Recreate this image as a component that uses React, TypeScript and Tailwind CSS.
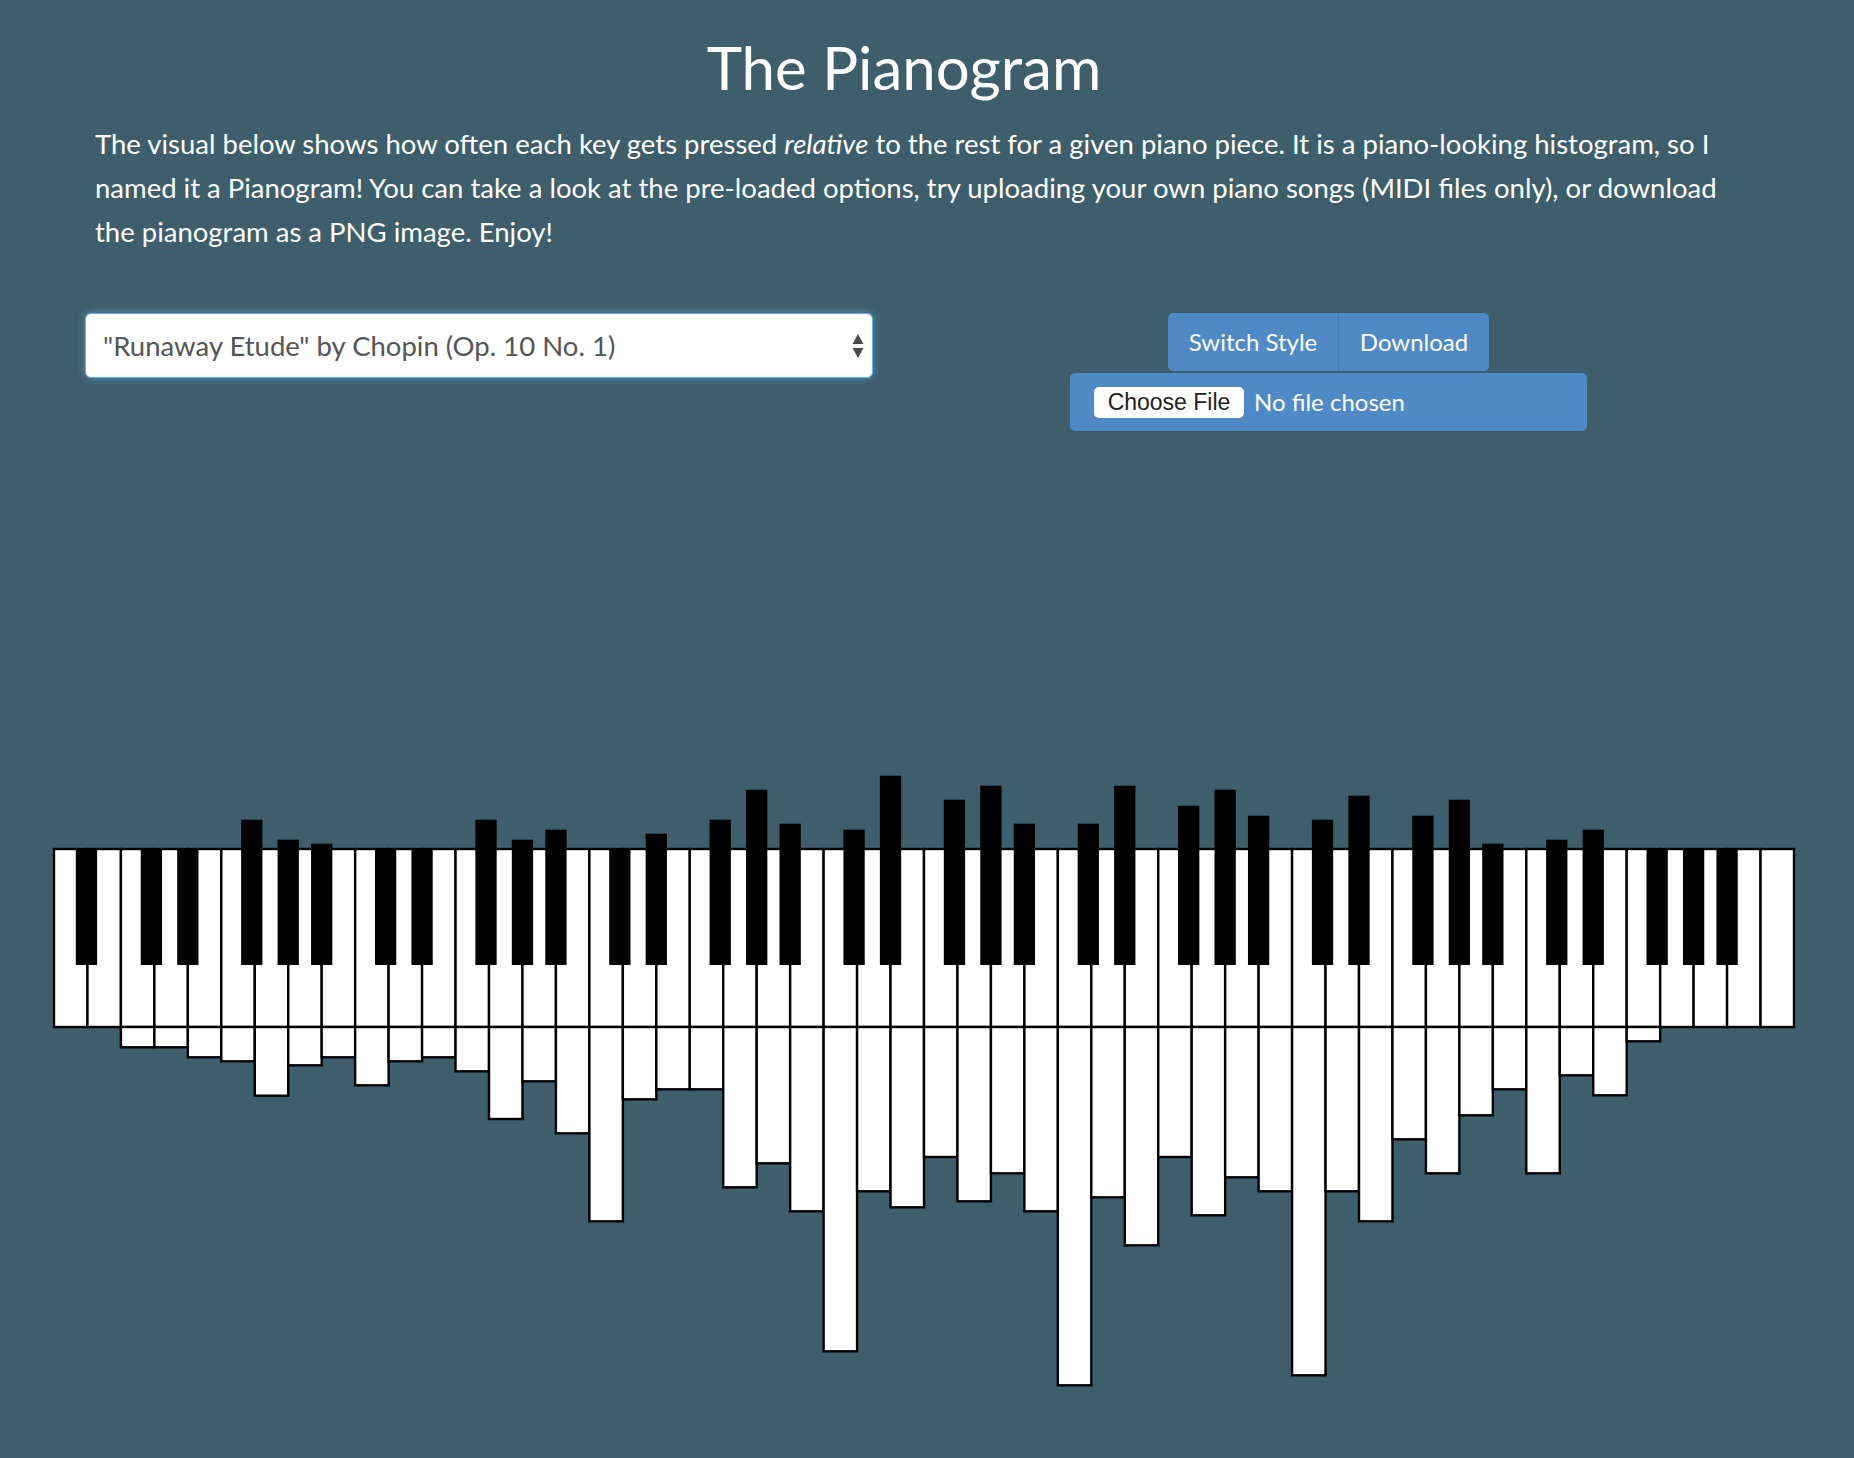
import React from 'react';

// how far each white key's bar drops below the keyboard (A0 .. C8)
const WHITE_EXT = [
  0, 0, 20.3, 20.3, 30.3, 34.3, 68.7, 38.3, 30.3, 58.3, 34.3, 30.3, 44.3, 92, 54.3, 106.3,
  194.3, 72.3, 62.3, 62.3, 160.3, 136.3, 184.3, 324.3, 164.3, 180.3, 130, 174.3, 146.3, 184.3,
  358.3, 170.3, 218.3, 130, 188.3, 150.3, 164.3, 348.3, 164.3, 194.3, 112.3, 146.3, 88.3, 62.3,
  146.3, 48.3, 68.3, 14.3, 0, 0, 0, 0,
];

// how far each black key's bar rises above the keyboard (A#0 .. A#7)
const BLACK_EXT = [
  0, 0, 0, 29.3, 9.3, 5.3, 0, 0, 29.3, 9.3, 19.3, 0, 15.3, 29.3, 59.3, 25.3, 19.3, 73.3,
  49.3, 63.3, 25.3, 25.3, 63.3, 43.3, 59.3, 33.3, 29.3, 53.3, 33.3, 49.3, 5.3, 9.3, 19.3, 0, 0, 0,
];

const KEY_LEFT = 54;
const KEY_RIGHT = 1794;
const WW = (KEY_RIGHT - KEY_LEFT) / 52;
const TOP = 849;
const BOTTOM = 1027;
const BLACK_BOTTOM = 965;
const BW = 21.3;
const STROKE = 2.4;

const blackKeys: { j: number; off: number }[] = [{ j: 0, off: -1 }];
for (let k = 0; k < 7; k++) {
  const c = 2 + 7 * k;
  blackKeys.push(
    { j: c, off: -3 },
    { j: c + 1, off: 0 },
    { j: c + 3, off: -3 },
    { j: c + 4, off: 0 },
    { j: c + 5, off: 0 },
  );
}

function Pianogram() {
  return (
    <svg className="mt-[309px] block" width={1854} height={718} viewBox="0 740 1854 718">
      {WHITE_EXT.map((_, i) => (
        <rect
          key={`w${i}`}
          x={KEY_LEFT + i * WW}
          y={TOP}
          width={WW}
          height={BOTTOM - TOP}
          fill="#fff"
          stroke="#000"
          strokeWidth={STROKE}
        />
      ))}
      {WHITE_EXT.map((ext, i) =>
        ext > 0 ? (
          <rect
            key={`we${i}`}
            x={KEY_LEFT + i * WW}
            y={BOTTOM}
            width={WW}
            height={ext}
            fill="#fff"
            stroke="#000"
            strokeWidth={STROKE}
          />
        ) : null,
      )}
      {blackKeys.map((b, n) => {
        const cx = KEY_LEFT + (b.j + 1) * WW + b.off;
        const h = BLACK_EXT[n];
        return (
          <rect
            key={`b${n}`}
            x={cx - BW / 2}
            y={TOP - h}
            width={BW}
            height={BLACK_BOTTOM - TOP + h}
            fill="#000"
          />
        );
      })}
    </svg>
  );
}

export default function App() {
  return (
    <div className="min-h-[1458px] w-full overflow-hidden bg-[#3e5e6b] font-['Lato',sans-serif] text-white">
      <h1 className="pt-[31px] pr-[46px] text-center text-[60px] leading-[72px] font-normal">The Pianogram</h1>
      <p className="mx-[95px] mt-[19px] w-[1640px] text-[27.5px] leading-[44px]">
        The visual below shows how often each key gets pressed <em>relative</em> to the rest for a given
        piano piece. It is a piano-looking histogram, so I named it a Pianogram! You can take a look at
        the pre-loaded options, try uploading your own piano songs (MIDI files only), or download the
        pianogram as a PNG image. Enjoy!
      </p>

      <div className="mt-[59px] flex">
        <div className="ml-[85px] w-[788px]">
          <div className="flex h-[65px] items-center justify-between rounded-[6px] border border-[#66afe9] bg-white pl-[17px] pr-[8px] text-[27.5px] text-[#555] shadow-[0_0_8px_rgba(102,175,233,0.6)]">
            <span>"Runaway Etude" by Chopin (Op. 10 No. 1)</span>
            <svg width="12" height="26" viewBox="0 0 12 26">
              <path d="M6 1 L11.5 11 L0.5 11 Z" fill="#4a4a4a" />
              <path d="M0.5 15 L11.5 15 L6 25 Z" fill="#4a4a4a" />
            </svg>
          </div>
        </div>

        <div className="flex w-[911px] flex-col items-center">
          <div className="flex h-[58px] overflow-hidden rounded-[5px] bg-[#4f8ac6] text-[24px] text-white">
            <button className="w-[171px] border-r border-[#4479b2] text-center">Switch Style</button>
            <button className="w-[150px] text-center">Download</button>
          </div>
          <div className="mt-[2px] flex h-[58px] w-[517px] items-center rounded-[5px] bg-[#4f8ac6] pl-[24px]">
            <span className="flex h-[31px] w-[150px] items-center justify-center rounded-[5px] bg-white font-['Liberation_Sans',Arial,sans-serif] text-[23px] text-[#222]">
              Choose File
            </span>
            <span className="ml-[10px] text-[24px] text-white">No file chosen</span>
          </div>
        </div>
      </div>

      <Pianogram />
    </div>
  );
}
